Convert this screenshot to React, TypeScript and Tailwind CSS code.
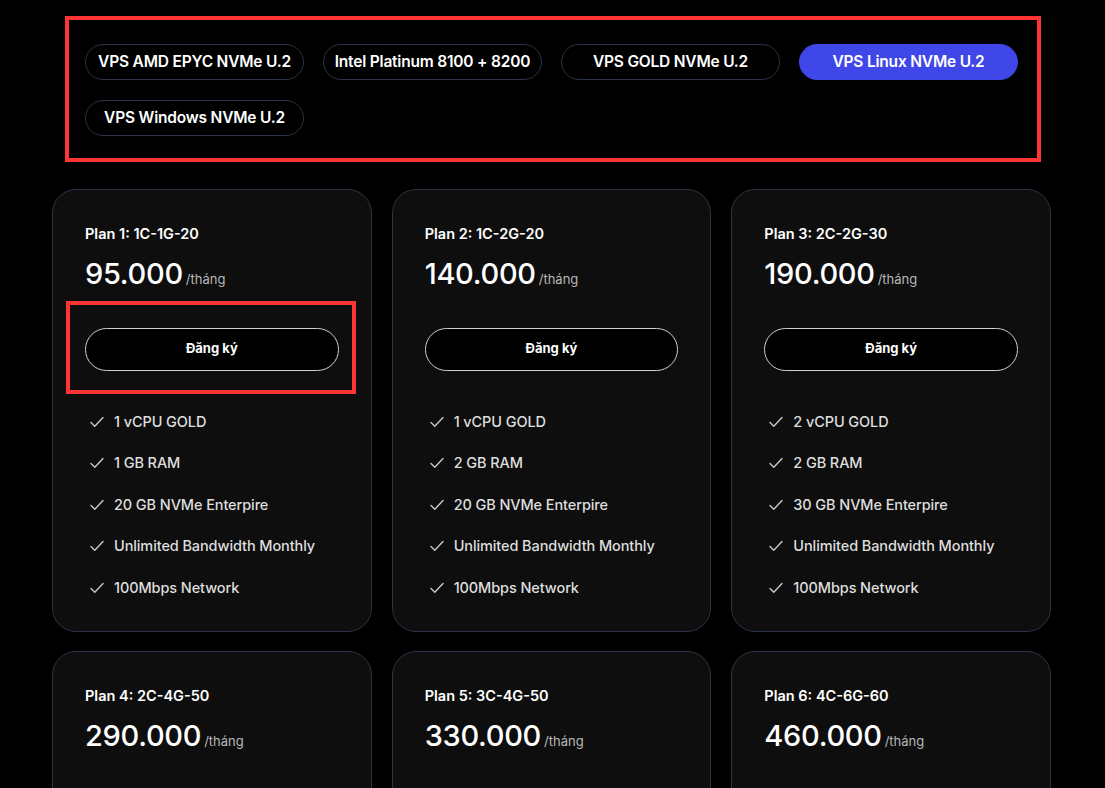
import React from "react";

const tabs = [
  "VPS AMD EPYC NVMe U.2",
  "Intel Platinum 8100 + 8200",
  "VPS GOLD NVMe U.2",
  "VPS Linux NVMe U.2",
  "VPS Windows NVMe U.2",
];

type Plan = {
  name: string;
  price: string;
  features: string[];
};

const plans: Plan[] = [
  {
    name: "Plan 1: 1C-1G-20",
    price: "95.000",
    features: ["1 vCPU GOLD", "1 GB RAM", "20 GB NVMe Enterpire", "Unlimited Bandwidth Monthly", "100Mbps Network"],
  },
  {
    name: "Plan 2: 1C-2G-20",
    price: "140.000",
    features: ["1 vCPU GOLD", "2 GB RAM", "20 GB NVMe Enterpire", "Unlimited Bandwidth Monthly", "100Mbps Network"],
  },
  {
    name: "Plan 3: 2C-2G-30",
    price: "190.000",
    features: ["2 vCPU GOLD", "2 GB RAM", "30 GB NVMe Enterpire", "Unlimited Bandwidth Monthly", "100Mbps Network"],
  },
  {
    name: "Plan 4: 2C-4G-50",
    price: "290.000",
    features: ["2 vCPU GOLD", "4 GB RAM", "50 GB NVMe Enterpire", "Unlimited Bandwidth Monthly", "100Mbps Network"],
  },
  {
    name: "Plan 5: 3C-4G-50",
    price: "330.000",
    features: ["3 vCPU GOLD", "4 GB RAM", "50 GB NVMe Enterpire", "Unlimited Bandwidth Monthly", "100Mbps Network"],
  },
  {
    name: "Plan 6: 4C-6G-60",
    price: "460.000",
    features: ["4 vCPU GOLD", "6 GB RAM", "60 GB NVMe Enterpire", "Unlimited Bandwidth Monthly", "100Mbps Network"],
  },
];

const Check = () => (
  <svg width="16" height="16" viewBox="0 0 16 16" fill="none" className="shrink-0">
    <path d="M2 8.5 L5.8 12.3 L14 3.5" stroke="#c8c8c8" strokeWidth="1.4" strokeLinecap="round" strokeLinejoin="round" />
  </svg>
);

const PlanCard: React.FC<{ plan: Plan; highlight?: boolean }> = ({ plan, highlight }) => {
  const button = (
    <button className="w-full h-[43px] rounded-full border border-[#cfcfcf] bg-black text-white text-[13px] font-bold">
      Đăng ký
    </button>
  );

  return (
    <div className="rounded-[24px] border border-[#2a3444] bg-[#0e0e0e] pl-[32px] pr-[32px] pt-[34px] pb-[33px]">
      <div className="text-[14.5px] font-semibold text-white leading-[20px]">{plan.name}</div>
      <div className="mt-[15px] flex items-baseline gap-[3px]">
        <span className="text-[29px] font-medium text-white leading-[30px] tracking-[-0.3px]">{plan.price}</span>
        <span className="text-[13px] text-[#b8b8b8]">/tháng</span>
      </div>
      {highlight ? (
        <div className="mt-[11px] -ml-[19px] -mr-[17px] border-[4px] border-[#ff3535] pt-[23px] pb-[19px] pl-[15px] pr-[13px]">
          {button}
        </div>
      ) : (
        <div className="pt-[38px] pb-[23px]">{button}</div>
      )}
      <ul className="pt-[18px] flex flex-col gap-[21.5px]">
        {plan.features.map((f) => (
          <li key={f} className="flex items-center gap-[9px] pl-[4px] text-[14.5px] font-medium text-[#dedede] leading-[20px] tracking-[-0.1px]">
            <Check />
            <span>{f}</span>
          </li>
        ))}
      </ul>
    </div>
  );
};

export default function App() {
  return (
    <div className="min-h-screen bg-black pt-[16px]" style={{ fontFamily: "Inter, 'Noto Sans', sans-serif" }}>
      <div className="ml-[65px] w-[976px] border-[4px] border-[#ff3535] pl-[16px] pr-[14px] pt-[24px] pb-[22px]">
        <div className="flex flex-wrap gap-x-[19px] gap-y-[20px]">
          {tabs.map((t, i) => (
            <button
              key={t}
              className={
                i === 3
                  ? "w-[219px] h-[36px] rounded-full bg-[#4047e8] border border-[#4047e8] text-white text-[15.5px] font-semibold tracking-[-0.2px]"
                  : "w-[219px] h-[36px] rounded-full bg-black border border-[#2a3444] text-white text-[15.5px] font-semibold tracking-[-0.2px]"
              }
            >
              {t}
            </button>
          ))}
        </div>
      </div>
      <div className="ml-[52px] mt-[27px] w-[999px] grid grid-cols-3 gap-x-[20px] gap-y-[19px]">
        {plans.map((p, i) => (
          <PlanCard key={p.name} plan={p} highlight={i === 0} />
        ))}
      </div>
    </div>
  );
}
